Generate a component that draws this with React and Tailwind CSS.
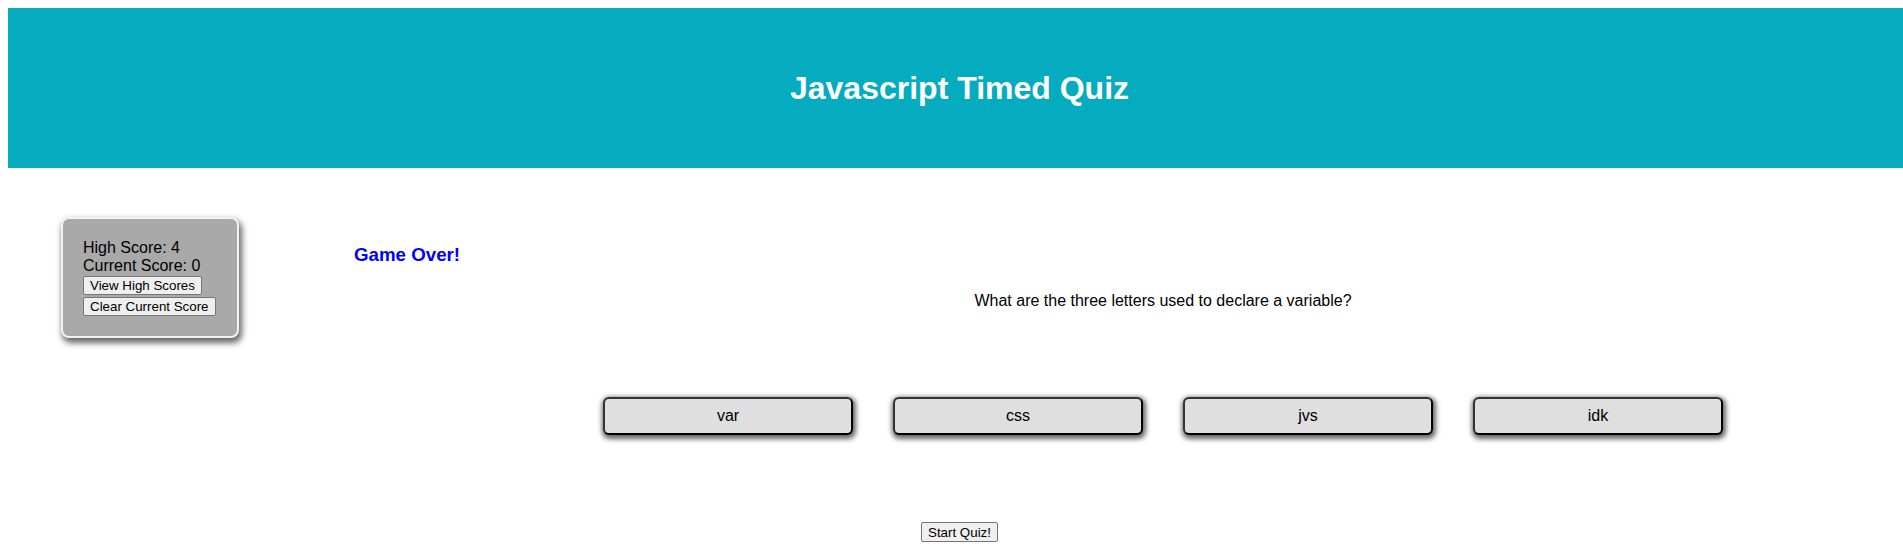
import React from 'react';

const answers = ['var', 'css', 'jvs', 'idk'];

const ScoreBox = () => (
  <div className="mt-[49px] ml-[53px] w-[178px] h-[121px] shrink-0 rounded-[8px] border-2 border-[#f2f2f2] bg-[#a9a9a9] px-[20px] py-[20px] shadow-[2px_4px_6px_1px_rgba(0,0,0,0.6)] text-[16px] leading-[18px] text-black">
    <div>High Score: 4</div>
    <div>Current Score: 0</div>
    <button className="mt-[1px] block h-[19px] rounded-[2px] border border-[#767676] bg-[#efefef] px-[6px] text-[13.33px] leading-[15px] text-black">
      View High Scores
    </button>
    <button className="mt-[2px] block h-[19px] rounded-[2px] border border-[#767676] bg-[#efefef] px-[6px] text-[13.33px] leading-[15px] text-black">
      Clear Current Score
    </button>
  </div>
);

const App = () => {
  return (
    <div className="overflow-hidden pt-2 pl-2 font-['Liberation_Sans',Arial,sans-serif] bg-white min-h-[559px]">
      <header className="flex h-[160px] w-[1903px] items-center justify-center bg-[#05abbf]">
        <h1 className="text-[32px] font-bold leading-[37px] text-white">Javascript Timed Quiz</h1>
      </header>

      <div className="flex items-start">
        <ScoreBox />

        <main className="ml-[115px] w-[1618px] shrink-0">
          <h3 className="mt-[76px] text-[18.72px] font-bold leading-[22px] text-[#0000ff]">Game Over!</h3>
          <p className="mt-[26px] text-center text-[16px] leading-[18px] text-black">
            What are the three letters used to declare a variable?
          </p>
          <div className="mt-[87px] flex justify-center gap-[40px]">
            {answers.map((a) => (
              <button
                key={a}
                className="h-[38px] w-[250px] rounded-[6px] border-2 border-l-[#333] border-t-[#333] border-r-black border-b-black bg-[#dfdfdf] text-[16px] text-black shadow-[1px_2px_5px_2px_rgba(0,0,0,0.6)]"
              >
                {a}
              </button>
            ))}
          </div>
        </main>
      </div>

      <div className="mt-[87px] flex w-[1903px] justify-center">
        <button className="h-[20px] rounded-[2px] border border-[#767676] bg-[#efefef] px-[6px] text-[13.33px] leading-[15px] text-black">
          Start Quiz!
        </button>
      </div>
    </div>
  );
};

export default App;
